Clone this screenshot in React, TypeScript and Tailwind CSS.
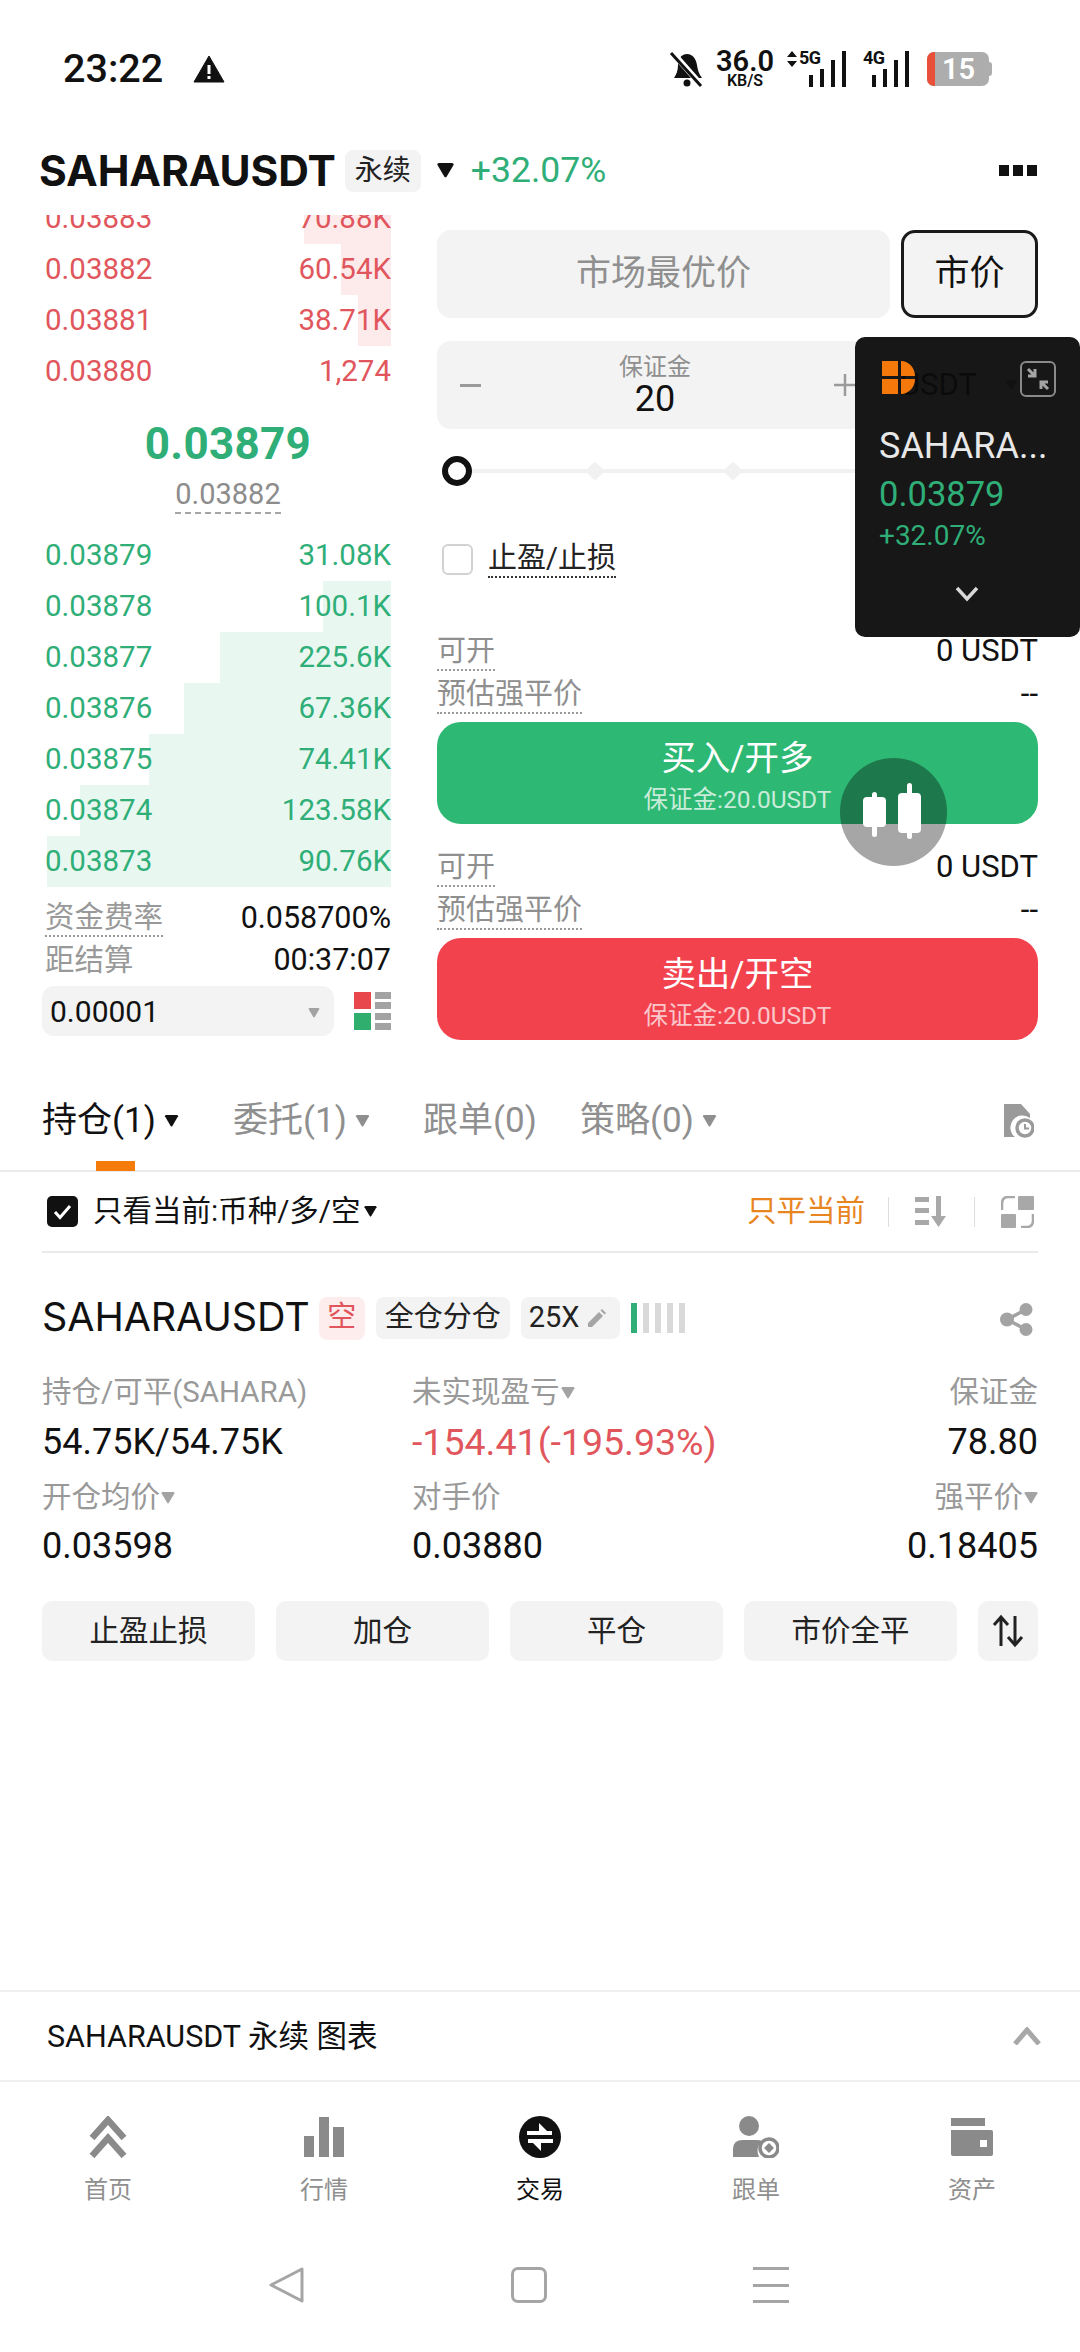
import React from "react";

const RED = "text-[#e0565c]";
const GREEN = "text-[#2fae78]";

function Caret({ className = "", w = 13, h = 11 }: { className?: string; w?: number; h?: number }) {
  return (
    <svg width={w} height={h} viewBox="0 0 13 11" className={className} fill="currentColor">
      <path d="M0.5 1.2 Q0.5 0 1.7 0 H11.3 Q12.5 0 12.5 1.2 L7.3 10 Q6.5 11 5.7 10 Z" />
    </svg>
  );
}

function BookRow({ price, qty, bar, ask }: { price: string; qty: string; bar?: number; ask?: boolean }) {
  return (
    <div className={`relative h-[51px] flex items-center justify-between ${ask ? RED : GREEN}`}>
      {bar ? (
        <div
          className={`absolute right-0 top-0 bottom-0 ${ask ? "bg-[#fdebeb]" : "bg-[#e8f8f0]"}`}
          style={{ width: bar }}
        />
      ) : null}
      <span className="relative">{price}</span>
      <span className="relative">{qty}</span>
    </div>
  );
}

function InfoRows() {
  return (
    <div className="text-[29px]">
      <div className="h-[43px] flex items-center justify-between">
        <span className="text-[#8f8f8f] border-b-2 border-dotted border-[#9a9a9a] leading-[36px]">可开</span>
        <span className="text-[#111] text-[31px]">0 USDT</span>
      </div>
      <div className="h-[43px] flex items-center justify-between">
        <span className="text-[#8f8f8f] border-b-2 border-dotted border-[#9a9a9a] leading-[36px]">预估强平价</span>
        <span className="text-[#111] text-[31px]">--</span>
      </div>
    </div>
  );
}

function TradeBtn({ title, color, sub }: { title: string; color: string; sub: string }) {
  return (
    <div className={`h-[102px] rounded-[24px] flex flex-col items-center text-white ${color}`}>
      <div className="text-[34.5px] leading-[40px] mt-[16px]">{title}</div>
      <div className={`text-[24.5px] leading-[30px] mt-[7px] ${sub}`}>保证金:20.0USDT</div>
    </div>
  );
}

function StatusBar() {
  return (
    <div className="h-[130px] flex items-center pl-[63px] pt-[7px] text-[#111] relative shrink-0">
      <span className="text-[39.5px] font-medium w-[130px]">23:22</span>
      <svg width="32" height="28" viewBox="0 0 32 28">
        <path d="M16 1 L31 27 H1 Z" fill="#111" stroke="#111" strokeLinejoin="round" />
        <rect x="14.5" y="10" width="3" height="9" fill="#fff" />
        <rect x="14.5" y="21" width="3" height="3" fill="#fff" />
      </svg>
      <div className="ml-auto mr-[88px] flex items-center">
        <svg width="36" height="36" viewBox="0 0 36 36" className="mr-[11px]">
          <path d="M18 3 C24 3 27 8 28 14 C29 21 31 24 33 27 H5 C7 24 9 20 9 14 C9 8 12 3 18 3Z" fill="#111" />
          <circle cx="18" cy="32" r="3.5" fill="#111" />
          <path d="M3 1 L33 35" stroke="#fff" strokeWidth="6" />
          <path d="M2 2 L32 35" stroke="#111" strokeWidth="3" />
        </svg>
        <div className="w-[58px] flex flex-col items-center mr-[11px]">
          <span className="text-[29px] font-semibold leading-[24px]">36.0</span>
          <span className="text-[16px] font-semibold leading-[15px]">KB/S</span>
        </div>
        <div className="relative w-[62px] h-[36px]">
          <svg width="14" height="16" viewBox="0 0 14 16" className="absolute left-0 top-0">
            <path d="M7 0 L12 6 H2 Z M7 16 L12 10 H2 Z" fill="#111" />
          </svg>
          <span className="absolute left-[14px] top-[-2px] text-[18px] font-bold leading-[18px] tracking-[-0.5px]">5G</span>
          <svg width="38" height="36" viewBox="0 0 38 36" className="absolute left-[24px] top-0">
            <rect x="0" y="24" width="4" height="12" fill="#111" />
            <rect x="11" y="18" width="4" height="18" fill="#111" />
            <rect x="22" y="9" width="4" height="27" fill="#111" />
            <rect x="33" y="0" width="4" height="36" fill="#111" />
          </svg>
        </div>
        <div className="relative w-[47px] h-[36px] ml-[16px]">
          <span className="absolute left-0 top-[-2px] text-[18px] font-bold leading-[18px] tracking-[-0.5px]">4G</span>
          <svg width="38" height="36" viewBox="0 0 38 36" className="absolute left-[9px] top-0">
            <rect x="0" y="24" width="4" height="12" fill="#111" />
            <rect x="11" y="18" width="4" height="18" fill="#111" />
            <rect x="22" y="9" width="4" height="27" fill="#111" />
            <rect x="33" y="0" width="4" height="36" fill="#111" />
          </svg>
        </div>
        <div className="ml-[17px] flex items-center">
          <div className="w-[62px] h-[34px] rounded-[7px] bg-[#adadad] overflow-hidden flex items-center relative">
            <div className="w-[8px] h-full bg-[#e8503a]" />
            <span className="ml-[7px] text-[29px] leading-[34px] font-semibold text-white">15</span>
          </div>
          <div className="w-[3px] h-[14px] bg-[#adadad] rounded-r-sm" />
        </div>
      </div>
    </div>
  );
}

function Header() {
  return (
    <div className="h-[85px] flex items-center pl-[39px] pr-[42px] pb-[4px] shrink-0">
      <span className="font-[Inter,'Noto_Sans_CJK_SC',sans-serif] text-[42.5px] font-bold text-[#111] tracking-[-0.1px]">SAHARAUSDT</span>
      <span className="ml-[9px] w-[76px] h-[42px] rounded-[8px] bg-[#f3f3f3] flex items-center justify-center text-[28px] text-[#222]">永续</span>
      <Caret w={19} h={15} className="ml-[15px] text-[#111]" />
      <span className={`ml-[16px] text-[35.5px] ${GREEN}`}>+32.07%</span>
      <div className="ml-auto flex gap-[4px] mt-[0px] -translate-x-[1px]">
        <div className="w-[10px] h-[11px] bg-[#111]" />
        <div className="w-[10px] h-[11px] bg-[#111]" />
        <div className="w-[10px] h-[11px] bg-[#111]" />
      </div>
    </div>
  );
}

function OrderBook() {
  return (
    <div className="w-[346px] h-full text-[29.5px] shrink-0">
      <div className="overflow-hidden h-[181px]">
        <div className="-mt-[22px]">
          <BookRow ask price="0.03883" qty="70.88K" bar={87} />
          <BookRow ask price="0.03882" qty="60.54K" bar={50} />
          <BookRow ask price="0.03881" qty="38.71K" bar={33} />
          <BookRow ask price="0.03880" qty="1,274" />
        </div>
      </div>
      <div className="h-[134px] flex flex-col items-center pl-[20px]">
        <div className={`mt-[24px] text-[44px] leading-[48px] font-bold ${GREEN} tracking-[0.3px]`}>0.03879</div>
        <div className="mt-[8px] text-[29px] leading-[36px] text-[#8c8c8c] border-b-2 border-dashed border-[#a5a5a5]">0.03882</div>
      </div>
      <div>
        <BookRow price="0.03879" qty="31.08K" />
        <BookRow price="0.03878" qty="100.1K" bar={68} />
        <BookRow price="0.03877" qty="225.6K" bar={171} />
        <BookRow price="0.03876" qty="67.36K" bar={207} />
        <BookRow price="0.03875" qty="74.41K" bar={242} />
        <BookRow price="0.03874" qty="123.58K" bar={311} />
        <BookRow price="0.03873" qty="90.76K" bar={344} />
      </div>
      <div className="mt-[10px] h-[42px] flex items-center justify-between text-[29.5px]">
        <span className="text-[#999] border-b-2 border-dotted border-[#999] leading-[36px]">资金费率</span>
        <span className="text-[#111] text-[30.5px]">0.058700%</span>
      </div>
      <div className="h-[42px] flex items-center justify-between text-[29.5px]">
        <span className="text-[#999] leading-[36px]">距结算</span>
        <span className="text-[#111] text-[30.5px]">00:37:07</span>
      </div>
      <div className="mt-[5px] -ml-[3px] flex items-center justify-between">
        <div className="w-[292px] h-[50px] rounded-[12px] bg-[#f3f3f3] flex items-center justify-between pl-[8px] pr-[13px] text-[#111] text-[30px]">
          <span>0.00001</span>
          <Caret w={14} h={10} className="text-[#a3a3a3] mt-[3px]" />
        </div>
        <svg width="37" height="38" viewBox="0 0 37 38" className="shrink-0">
          <rect x="0" y="0" width="17" height="17" fill="#e8484c" />
          <rect x="0" y="21" width="17" height="17" fill="#2fae6e" />
          <rect x="21" y="0" width="16" height="7" fill="#a3a3a3" />
          <rect x="21" y="10" width="16" height="7" fill="#a3a3a3" />
          <rect x="21" y="21" width="16" height="7" fill="#a3a3a3" />
          <rect x="21" y="31" width="16" height="7" fill="#a3a3a3" />
        </svg>
      </div>
    </div>
  );
}

function OrderForm() {
  return (
    <div className="w-[601px] shrink-0 pt-[15px]">
      <div className="flex gap-[11px]">
        <div className="w-[453px] h-[88px] rounded-[14px] bg-[#f3f3f3] flex items-center justify-center text-[35px] text-[#8f8f8f]">市场最优价</div>
        <div className="w-[137px] h-[88px] rounded-[14px] bg-[#f3f3f3] border-[3px] border-[#1a1a1a] flex items-center justify-center text-[35px] text-[#111]">市价</div>
      </div>
      <div className="mt-[23px] h-[88px] rounded-[14px] bg-[#f3f3f3] flex items-center pl-[23px] relative">
        <div className="w-[21px] h-[3px] bg-[#9a9a9a]" />
        <div className="w-[348px] flex flex-col items-center">
          <span className="text-[24px] leading-[28px] text-[#8f8f8f]">保证金</span>
          <span className="text-[36px] leading-[36px] text-[#111]">20</span>
        </div>
        <svg width="22" height="22" viewBox="0 0 22 22" className="ml-[5px] shrink-0">
          <path d="M11 0 V22 M0 11 H22" stroke="#9a9a9a" strokeWidth="2.5" />
        </svg>
        <span className="ml-[44px] text-[31px] text-[#222]">USDT</span>
        <Caret w={13} h={10} className="ml-[28px] text-[#888]" />
      </div>
      <div className="mt-[27px] h-[30px] relative flex items-center">
        <div className="ml-[5px] w-full h-[4px] bg-[#f1f1f1]" />
        <div className="absolute left-[5px] top-0 w-[30px] h-[30px] rounded-full border-[6px] border-[#111] bg-white" />
        <div className="absolute left-[151px] top-[8px] w-[14px] h-[14px] rotate-45 rounded-[3px] bg-[#f1f1f1]" />
        <div className="absolute left-[289px] top-[8px] w-[14px] h-[14px] rotate-45 rounded-[3px] bg-[#f1f1f1]" />
      </div>
      <div className="mt-[53px] h-[40px] flex items-center pl-[5px]">
        <div className="w-[31px] h-[31px] rounded-[6px] border-2 border-[#d2d2d2]" />
        <span className="ml-[15px] text-[29px] leading-[36px] text-[#222] border-b-2 border-dotted border-[#333]">止盈/止损</span>
      </div>
      <div className="mt-[51px]">
        <InfoRows />
      </div>
      <div className="mt-[6px]">
        <TradeBtn title="买入/开多" color="bg-[#2db873]" sub="text-[#c8ecd9]" />
      </div>
      <div className="mt-[22px]">
        <InfoRows />
      </div>
      <div className="mt-[6px]">
        <TradeBtn title="卖出/开空" color="bg-[#f2424e]" sub="text-[#fbc6ca]" />
      </div>
    </div>
  );
}

function FloatPanel() {
  return (
    <div className="absolute left-[855px] top-[337px] w-[225px] h-[300px] rounded-[10px] bg-[#0b0b0b]/95 pl-[24px] pr-[24px]">
      <div className="flex justify-between items-start pt-[24px] pl-[3px]">
        <svg width="34" height="33" viewBox="0 0 34 33">
          <path d="M0 0 H16 V15 H0 Z M19 0 C27 0 33 7 33 15 H19 Z M0 18 H16 V33 H0 Z M19 18 H33 C33 26 27 33 19 33 Z" fill="#f5780a" />
        </svg>
        <svg width="36" height="36" viewBox="0 0 36 36" fill="none">
          <rect x="1" y="1" width="34" height="34" rx="5" stroke="#8a8a8a" strokeWidth="2" />
          <path d="M8 8 L15 15 M15 8 V15 H8" stroke="#a5a5a5" strokeWidth="3" />
          <path d="M28 28 L21 21 M21 28 V21 H28" stroke="#a5a5a5" strokeWidth="3" />
        </svg>
      </div>
      <div className="mt-[29px] text-[36px] leading-[40px] text-[#e8e8e8] whitespace-nowrap">SAHARA...</div>
      <div className={`mt-[8px] text-[34.5px] leading-[40px] ${GREEN}`}>0.03879</div>
      <div className={`mt-[6px] text-[28px] leading-[32px] ${GREEN}`}>+32.07%</div>
      <div className="flex justify-center mt-[34px] pr-[2px]">
        <svg width="24" height="16" viewBox="0 0 24 16" fill="none">
          <path d="M2 2 L12 13 L22 2" stroke="#d8d8d8" strokeWidth="3.5" />
        </svg>
      </div>
    </div>
  );
}

function FloatCandle() {
  return (
    <div className="absolute left-[840px] top-[758px] w-[107px] h-[108px] rounded-full bg-black/35">
      <svg width="107" height="108" viewBox="0 0 107 108" fill="#fff">
        <rect x="23" y="39" width="23" height="30" rx="4" />
        <rect x="32" y="34" width="5" height="45" rx="2.5" />
        <rect x="58" y="35" width="23" height="40" rx="4" />
        <rect x="67" y="25" width="5" height="56" rx="2.5" />
      </svg>
    </div>
  );
}

function Tab({ label, active, caret }: { label: string; active?: boolean; caret?: boolean }) {
  return (
    <div className={`flex items-center text-[35px] ${active ? "text-[#111]" : "text-[#8f8f8f]"}`}>
      <span>{label}</span>
      {caret ? <Caret w={15} h={12} className="ml-[8px]" /> : null}
    </div>
  );
}

function Tabs() {
  return (
    <div className="relative h-[132px] border-b-2 border-[#ebebeb] flex items-center pl-[42px] pr-[46px] pt-[32px] shrink-0">
      <div className="w-[191px]"><Tab label="持仓(1)" active caret /></div>
      <div className="w-[190px]"><Tab label="委托(1)" caret /></div>
      <div className="w-[157px]"><Tab label="跟单(0)" /></div>
      <Tab label="策略(0)" caret />
      <svg width="30" height="34" viewBox="0 0 30 34" className="ml-auto">
        <path d="M0 0 H17 L26 10 V14 A11 11 0 0 0 11 33 H0 Z" fill="#9a9a9a" />
        <circle cx="21" cy="24" r="8" fill="none" stroke="#9a9a9a" strokeWidth="3.5" />
        <path d="M21 20 V24.5 H25" stroke="#9a9a9a" strokeWidth="2" fill="none" />
      </svg>
      <div className="absolute left-[96px] bottom-[-1px] w-[39px] h-[10px] bg-[#f57c0a]" />
    </div>
  );
}

function FilterRow() {
  return (
    <div className="mx-[42px] h-[81px] border-b-2 border-[#ebebeb] flex items-center pl-[5px] pr-[4px] shrink-0">
      <div className="w-[31px] h-[31px] rounded-[5px] bg-[#111] flex items-center justify-center">
        <svg width="19" height="16" viewBox="0 0 19 16" fill="none">
          <path d="M2 8 L7 13.5 L17 2" stroke="#fff" strokeWidth="3" />
        </svg>
      </div>
      <span className="ml-[15px] text-[29.5px] text-[#111]">只看当前:币种/多/空</span>
      <Caret w={13} h={11} className="ml-[3px] text-[#111]" />
      <span className="ml-auto text-[29.5px] text-[#e8851e]">只平当前</span>
      <div className="ml-[23px] w-[1px] h-[30px] bg-[#dedede]" />
      <svg width="33" height="31" viewBox="0 0 33 31" className="ml-[26px]" fill="#a8a8a8">
        <rect x="0" y="1" width="14" height="5" />
        <rect x="0" y="12" width="14" height="5" />
        <rect x="0" y="24" width="14" height="5" />
        <rect x="21" y="0" width="5" height="22" />
        <path d="M16 20 H31 L23.5 31 Z" />
      </svg>
      <div className="ml-[26px] w-[1px] h-[30px] bg-[#dedede]" />
      <svg width="33" height="32" viewBox="0 0 33 32" className="ml-[26px]" fill="#a8a8a8">
        <rect x="17" y="0" width="16" height="14" rx="1" />
        <rect x="0" y="18" width="15" height="14" rx="1" />
        <path d="M14 1 H7 Q1 1 1 8 V14" fill="none" stroke="#a8a8a8" strokeWidth="2.5" />
        <path d="M20 31 H26 Q32 31 32 24 V18" fill="none" stroke="#a8a8a8" strokeWidth="2.5" />
      </svg>
    </div>
  );
}

function Label({ text, right, caret }: { text: string; right?: boolean; caret?: boolean }) {
  return (
    <div className={`flex items-center text-[29.5px] text-[#999] pt-[1px] ${right ? "justify-end" : ""}`}>
      <span>{text}</span>
      {caret ? <Caret w={14} h={12} className="ml-[1px] text-[#a3a3a3]" /> : null}
    </div>
  );
}

function Value({ text, right, tone }: { text: string; right?: boolean; tone?: string }) {
  return <div className={`text-[36px] leading-[44px] ${right ? "text-right" : ""} ${tone ?? "text-[#111]"}`}>{text}</div>;
}

function Position() {
  return (
    <div className="px-[42px] shrink-0">
      <div className="mt-[43px] h-[44px] flex items-center">
        <span className="font-[Inter,'Noto_Sans_CJK_SC',sans-serif] text-[39.5px] text-[#111] tracking-[-0.1px]">SAHARAUSDT</span>
        <span className="ml-[9px] w-[46px] h-[43px] rounded-[8px] bg-[#fdeded] text-[#e0565c] text-[29px] flex items-center justify-center">空</span>
        <span className="ml-[11px] w-[134px] h-[42px] rounded-[8px] bg-[#f3f3f3] text-[#222] text-[29px] flex items-center justify-center">全仓分仓</span>
        <span className="ml-[11px] w-[99px] h-[42px] rounded-[8px] bg-[#f3f3f3] text-[#222] text-[29px] flex items-center pl-[8px]">
          25X
          <svg width="20" height="20" viewBox="0 0 20 20" className="ml-[8px]" fill="#a5a5a5">
            <path d="M1 15 L12 4 L16 8 L5 19 H1 Z M13.5 2.5 L15 1 L19 5 L17.5 6.5 Z" />
          </svg>
        </span>
        <div className="ml-[11px] flex gap-[6px] h-[30px]">
          <div className="w-[6px] bg-[#2fae78]" />
          <div className="w-[6px] bg-[#d9d9d9]" />
          <div className="w-[6px] bg-[#d9d9d9]" />
          <div className="w-[6px] bg-[#d9d9d9]" />
          <div className="w-[6px] bg-[#d9d9d9]" />
        </div>
        <svg width="33" height="33" viewBox="0 0 33 33" className="ml-auto mr-[5px] mt-[3px]" fill="#a3a3a3">
          <circle cx="26" cy="6.5" r="6.5" />
          <circle cx="26" cy="26.5" r="6.5" />
          <circle cx="7" cy="16.5" r="7" />
          <path d="M7 16.5 L26 6.5 M7 16.5 L26 26.5" stroke="#a3a3a3" strokeWidth="3.5" />
        </svg>
      </div>
      <div className="mt-[32px] grid grid-cols-[370px_1fr_auto] grid-rows-[40px_60px_50px_48px] items-center">
        <Label text="持仓/可平(SAHARA)" />
        <Label text="未实现盈亏" caret />
        <Label text="保证金" right />
        <Value text="54.75K/54.75K" />
        <Value text="-154.41(-195.93%)" tone="text-[#e0565c] text-[37.5px]" />
        <Value text="78.80" right />
        <Label text="开仓均价" caret />
        <Label text="对手价" />
        <Label text="强平价" caret right />
        <Value text="0.03598" />
        <Value text="0.03880" />
        <Value text="0.18405" right />
      </div>
      <div className="mt-[31px] flex gap-[21px] text-[29.5px] text-[#222]">
        {["止盈止损", "加仓", "平仓", "市价全平"].map((t) => (
          <div key={t} className="w-[213px] h-[60px] rounded-[10px] bg-[#f3f3f3] flex items-center justify-center">{t}</div>
        ))}
        <div className="w-[60px] h-[60px] rounded-[10px] bg-[#f3f3f3] flex items-center justify-center">
          <svg width="34" height="34" viewBox="0 0 34 34" fill="none" stroke="#222" strokeWidth="3">
            <path d="M10 32 V3 M3 11 L10 3 L17 11" />
            <path d="M24 2 V31 M17 23 L24 31 L31 23" />
          </svg>
        </div>
      </div>
    </div>
  );
}

function ChartBar() {
  return (
    <div className="h-[92px] border-y-2 border-[#f0f0f0] flex items-center pl-[47px] pr-[39px] shrink-0">
      <span className="text-[30.5px] text-[#111] pt-[2px]">SAHARAUSDT 永续 图表</span>
      <svg width="28" height="18" viewBox="0 0 28 18" fill="none" className="ml-auto">
        <path d="M2 17 L14 3 L26 17" stroke="#a8a8a8" strokeWidth="5" />
      </svg>
    </div>
  );
}

function NavItem({ label, active, children }: { label: string; active?: boolean; children: React.ReactNode }) {
  return (
    <div className="flex flex-col items-center">
      <div className="h-[44px] flex items-center justify-center">{children}</div>
      <span className={`mt-[16px] text-[24px] leading-[30px] ${active ? "text-[#111]" : "text-[#8f8f8f]"}`}>{label}</span>
    </div>
  );
}

function BottomNav() {
  const g = "#8a8a8a";
  return (
    <div className="h-[148px] grid grid-cols-5 pt-[33px] shrink-0">
      <NavItem label="首页">
        <svg width="38" height="42" viewBox="0 0 38 42" fill="none" stroke={g} strokeWidth="6.5">
          <path d="M3 22 L19 4 L35 22" />
          <path d="M3 40 L19 22 L35 40" />
        </svg>
      </NavItem>
      <NavItem label="行情">
        <svg width="40" height="40" viewBox="0 0 40 40" fill={g}>
          <rect x="0" y="19" width="10" height="21" />
          <rect x="15" y="0" width="10" height="40" />
          <rect x="29" y="10" width="11" height="30" />
        </svg>
      </NavItem>
      <NavItem label="交易" active>
        <svg width="42" height="42" viewBox="0 0 42 42">
          <circle cx="21" cy="21" r="21" fill="#111" />
          <path d="M20 7 V19 H32 Z" fill="#fff" />
          <path d="M8 15 H33 V19 H8 Z" fill="#fff" />
          <path d="M9 23 H34 V27 H9 Z" fill="#fff" />
          <path d="M22 35 V23 H10 Z" fill="#fff" />
        </svg>
      </NavItem>
      <NavItem label="跟单">
        <svg width="46" height="42" viewBox="0 0 46 42" fill={g}>
          <ellipse cx="16" cy="10" rx="10" ry="10" />
          <path d="M0 41 V33 Q0 24 10 24 H24 Q27 24 29 25 Q22 32 26 41 Z" />
          <circle cx="36" cy="32" r="9" fill="none" stroke={g} strokeWidth="3.5" />
          <rect x="32.5" y="28.5" width="7" height="7" transform="rotate(45 36 32)" />
        </svg>
      </NavItem>
      <NavItem label="资产">
        <svg width="42" height="38" viewBox="0 0 42 38" fill={g}>
          <rect x="0" y="0" width="34" height="8" />
          <path d="M0 12 H40 Q42 12 42 14 V36 Q42 38 40 38 H2 Q0 38 0 36 Z" />
          <rect x="29" y="22" width="7" height="7" fill="#fff" />
        </svg>
      </NavItem>
    </div>
  );
}

function SystemNav() {
  return (
    <div className="h-[122px] flex items-center justify-center gap-[206px] pr-[23px] pb-[12px] shrink-0">
      <svg width="36" height="36" viewBox="0 0 36 36" fill="none" stroke="#a5a5a5" strokeWidth="3" strokeLinejoin="round">
        <path d="M33 2 V34 L2 18 Z" />
      </svg>
      <div className="w-[36px] h-[36px] rounded-[7px] border-[3px] border-[#a5a5a5]" />
      <div className="w-[36px] h-[36px] flex flex-col justify-between">
        <div className="h-[3px] bg-[#a5a5a5]" />
        <div className="h-[3px] bg-[#a5a5a5]" />
        <div className="h-[3px] bg-[#a5a5a5]" />
      </div>
    </div>
  );
}

export default function App() {
  return (
    <div className="relative w-[1080px] h-[2352px] bg-white overflow-hidden flex flex-col font-[Roboto,'Noto_Sans_CJK_SC',sans-serif]">
      <StatusBar />
      <Header />
      <div className="h-[825px] flex pl-[45px] gap-[46px] shrink-0">
        <OrderBook />
        <OrderForm />
      </div>
      <Tabs />
      <FilterRow />
      <Position />
      <div className="flex-1" />
      <ChartBar />
      <BottomNav />
      <SystemNav />
      <FloatPanel />
      <FloatCandle />
    </div>
  );
}
